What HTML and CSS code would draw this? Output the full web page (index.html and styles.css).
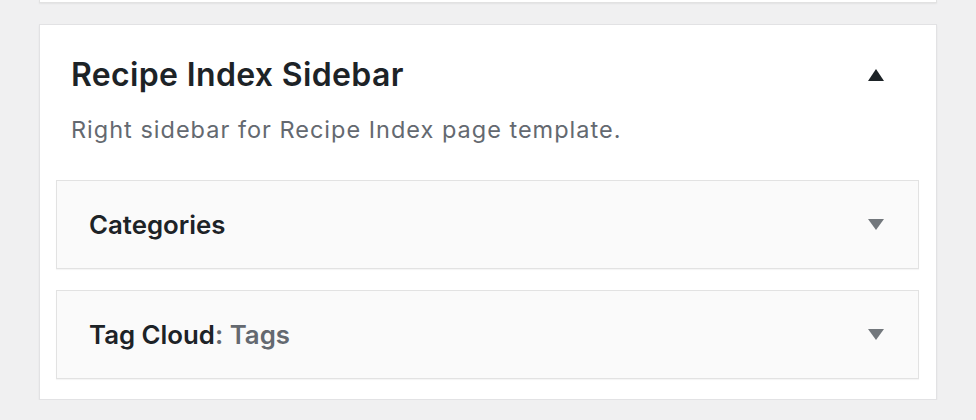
FILE: index.html
```html
<!DOCTYPE html>
<html lang="en">
<head>
<meta charset="utf-8">
<title>Widgets</title>
<link rel="stylesheet" href="styles.css">
</head>
<body>
<div class="page">
  <div class="prev-card"></div>
  <section class="sidebar-card">
    <div class="sidebar-head">
      <h2 class="sidebar-name">Recipe Index Sidebar</h2>
      <span class="toggle toggle-up" aria-hidden="true"></span>
    </div>
    <p class="sidebar-desc">Right sidebar for Recipe Index page template.</p>
    <div class="widgets">
      <div class="widget">
        <h3 class="widget-title">Categories</h3>
        <span class="toggle toggle-down" aria-hidden="true"></span>
      </div>
      <div class="widget">
        <h3 class="widget-title">Tag Cloud<span class="in-title">: Tags</span></h3>
        <span class="toggle toggle-down" aria-hidden="true"></span>
      </div>
    </div>
  </section>
</div>
</body>
</html>
```
FILE: styles.css
```css
html, body {
  margin: 0;
  padding: 0;
  background: #f0f0f1;
}
body {
  font-family: Inter, "Noto Sans", "Liberation Sans", sans-serif;
  color: #1d2327;
}
.page {
  padding: 0 39px;
}
.prev-card {
  height: 2px;
  background: #fff;
  border: 1px solid #e2e2e2;
  border-top: none;
  box-shadow: 0 1px 2px rgba(0,0,0,.06);
}
.sidebar-card {
  margin-top: 21px;
  background: #fff;
  border: 1px solid #e2e2e4;
  box-shadow: 0 1px 2px rgba(0,0,0,.05);
  padding: 0 17px 20px 16px;
}
.sidebar-head {
  display: flex;
  align-items: center;
  justify-content: space-between;
  padding: 28px 35px 0 15px;
  height: 44px;
}
.sidebar-name {
  margin: 0;
  font-size: 32px;
  font-weight: 600;
  letter-spacing: 0.35px;
  line-height: 44px;
}
.sidebar-desc {
  margin: 18px 0 0 15px;
  font-size: 23.5px;
  letter-spacing: 1px;
  line-height: 30px;
  color: #646970;
}
.widgets {
  display: flex;
  flex-direction: column;
  gap: 21px;
  margin-top: 35px;
}
.widget {
  display: flex;
  align-items: center;
  justify-content: space-between;
  height: 87px;
  background: #fafafa;
  border: 1px solid #e2e2e2;
  box-shadow: 0 1px 1px rgba(0,0,0,.04);
  padding: 0 34px 0 32px;
}
.widget-title {
  margin: 0;
  font-size: 25.8px;
  font-weight: 600;
  color: #1d2327;
}
.in-title {
  color: #646970;
}
.toggle {
  width: 0;
  height: 0;
  border-left: 8px solid transparent;
  border-right: 8px solid transparent;
}
.toggle-up {
  border-bottom: 12px solid #1d2327;
}
.toggle-down {
  border-top: 11px solid #72777c;
}
```
